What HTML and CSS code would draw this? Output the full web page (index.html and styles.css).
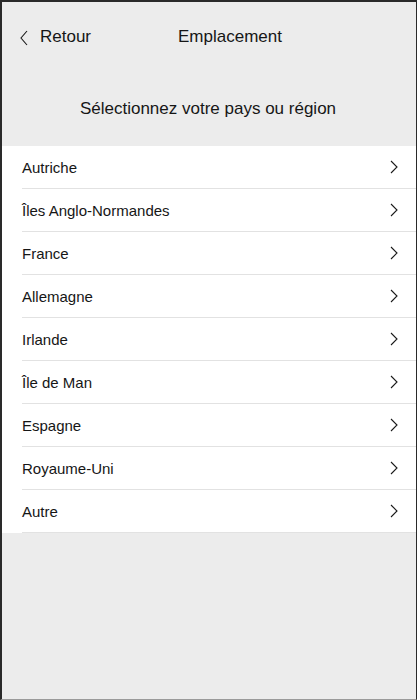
FILE: index.html
```html
<!DOCTYPE html>
<html lang="fr">
<head>
<meta charset="utf-8">
<title>Emplacement</title>
<link rel="stylesheet" href="styles.css">
</head>
<body>
<div class="screen">
  <header class="topbar">
    <a class="back" href="#">
      <svg class="back-icon" width="8" height="16" viewBox="0 0 8 16"><path d="M7 1 L1 8 L7 15" fill="none" stroke="#1a1a1a" stroke-width="1.1"/></svg>
      <span>Retour</span>
    </a>
    <h1 class="title">Emplacement</h1>
  </header>
  <div class="subtitle">Sélectionnez votre pays ou région</div>
  <ul class="list">
    <li class="item"><span>Autriche</span><svg class="chev" width="8" height="14" viewBox="0 0 8 14"><path d="M1 1 L7 7 L1 13" fill="none" stroke="#1a1a1a" stroke-width="1.1"/></svg></li>
    <li class="item"><span>Îles Anglo-Normandes</span><svg class="chev" width="8" height="14" viewBox="0 0 8 14"><path d="M1 1 L7 7 L1 13" fill="none" stroke="#1a1a1a" stroke-width="1.1"/></svg></li>
    <li class="item"><span>France</span><svg class="chev" width="8" height="14" viewBox="0 0 8 14"><path d="M1 1 L7 7 L1 13" fill="none" stroke="#1a1a1a" stroke-width="1.1"/></svg></li>
    <li class="item"><span>Allemagne</span><svg class="chev" width="8" height="14" viewBox="0 0 8 14"><path d="M1 1 L7 7 L1 13" fill="none" stroke="#1a1a1a" stroke-width="1.1"/></svg></li>
    <li class="item"><span>Irlande</span><svg class="chev" width="8" height="14" viewBox="0 0 8 14"><path d="M1 1 L7 7 L1 13" fill="none" stroke="#1a1a1a" stroke-width="1.1"/></svg></li>
    <li class="item"><span>Île de Man</span><svg class="chev" width="8" height="14" viewBox="0 0 8 14"><path d="M1 1 L7 7 L1 13" fill="none" stroke="#1a1a1a" stroke-width="1.1"/></svg></li>
    <li class="item"><span>Espagne</span><svg class="chev" width="8" height="14" viewBox="0 0 8 14"><path d="M1 1 L7 7 L1 13" fill="none" stroke="#1a1a1a" stroke-width="1.1"/></svg></li>
    <li class="item"><span>Royaume-Uni</span><svg class="chev" width="8" height="14" viewBox="0 0 8 14"><path d="M1 1 L7 7 L1 13" fill="none" stroke="#1a1a1a" stroke-width="1.1"/></svg></li>
    <li class="item"><span>Autre</span><svg class="chev" width="8" height="14" viewBox="0 0 8 14"><path d="M1 1 L7 7 L1 13" fill="none" stroke="#1a1a1a" stroke-width="1.1"/></svg></li>
  </ul>
</div>
</body>
</html>
```

FILE: styles.css
```css
html, body {
  margin: 0;
  padding: 0;
}
body {
  font-family: "Liberation Sans", Arial, sans-serif;
  color: #161616;
  background: #ececec;
}
.screen {
  box-sizing: border-box;
  width: 417px;
  height: 700px;
  border-top: 2px solid #2a2a2a;
  border-left: 2px solid #2a2a2a;
  border-right: 1px solid #2a2a2a;
  border-bottom: 1px solid #9a9a9a;
  background: #ececec;
  display: flex;
  flex-direction: column;
}
.topbar {
  height: 70px;
  display: flex;
  align-items: center;
  padding-left: 18px;
}
.back {
  display: flex;
  align-items: center;
  gap: 12px;
  color: #161616;
  text-decoration: none;
  font-size: 17px;
}
.back-icon {
  display: block;
  margin-top: 1px;
}
.title {
  margin: 0 0 0 87px;
  font-size: 17px;
  font-weight: normal;
}
.subtitle {
  height: 74px;
  display: flex;
  align-items: center;
  justify-content: center;
  font-size: 17px;
  padding-right: 2px;
}
.list {
  list-style: none;
  margin: 0;
  padding: 0 0 0 20px;
  background: #ffffff;
}
.item {
  height: 42px;
  border-bottom: 1px solid #e2e2e2;
  display: flex;
  align-items: center;
  justify-content: space-between;
  font-size: 15px;
  padding-right: 18px;
}
.chev {
  display: block;
}
```
